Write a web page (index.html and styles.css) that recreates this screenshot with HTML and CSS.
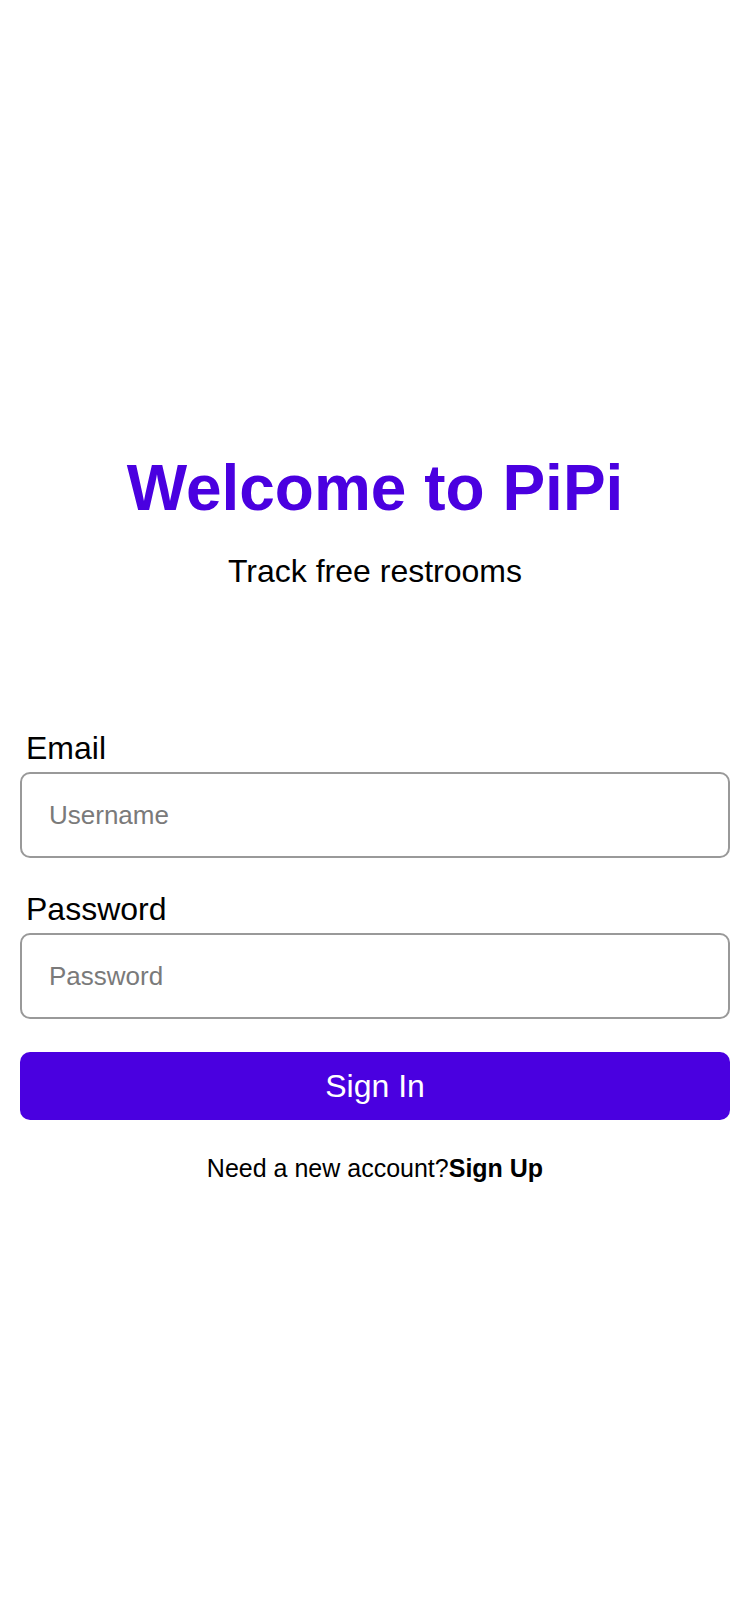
FILE: index.html
```html
<!DOCTYPE html>
<html lang="en">
<head>
<meta charset="utf-8">
<meta name="viewport" content="width=750">
<title>PiPi - Sign In</title>
<link rel="stylesheet" href="styles.css">
</head>
<body>
<main class="screen">
  <header class="intro">
    <h1 class="title">Welcome to PiPi</h1>
    <p class="subtitle">Track free restrooms</p>
  </header>
  <form class="form">
    <label class="field">
      <span class="field-label">Email</span>
      <input class="field-input" type="text" placeholder="Username">
    </label>
    <label class="field">
      <span class="field-label">Password</span>
      <input class="field-input" type="password" placeholder="Password">
    </label>
    <button class="primary-btn" type="button">Sign In</button>
    <p class="switch">Need a new account?<a class="switch-link" href="#">Sign Up</a></p>
  </form>
</main>
</body>
</html>
```

FILE: styles.css
```css
html, body {
  margin: 0;
  padding: 0;
  background: #ffffff;
}

body {
  font-family: "Liberation Sans", Arial, Helvetica, sans-serif;
  color: #000000;
}

.screen {
  width: 750px;
  min-height: 1624px;
  box-sizing: border-box;
  padding: 450px 20px 0 20px;
  display: flex;
  flex-direction: column;
}

.intro {
  display: flex;
  flex-direction: column;
  align-items: center;
  gap: 26px;
}

.title {
  margin: 0;
  font-size: 64px;
  line-height: 76px;
  font-weight: 700;
  color: #4a00e0;
}

.subtitle {
  margin: 0;
  font-size: 32px;
  line-height: 38px;
  color: #000000;
}

.form {
  margin-top: 139px;
  display: flex;
  flex-direction: column;
}

.field {
  display: flex;
  flex-direction: column;
  gap: 5px;
  margin-bottom: 32px;
}

.field-label {
  padding-left: 6px;
  font-size: 32px;
  line-height: 38px;
  color: #000000;
}

.field-input {
  box-sizing: border-box;
  width: 100%;
  height: 86px;
  margin: 0;
  padding: 0 27px;
  border: 2px solid #999999;
  border-radius: 10px;
  background: #ffffff;
  font-family: "Liberation Sans", Arial, Helvetica, sans-serif;
  font-size: 26px;
  color: #000000;
  outline: none;
}

.field-input::placeholder {
  color: #7a7a7a;
  opacity: 1;
}

.primary-btn {
  margin: 1px 0 0 0;
  height: 68px;
  width: 100%;
  border: none;
  border-radius: 10px;
  background: #4a00e0;
  color: #ffffff;
  font-family: "Liberation Sans", Arial, Helvetica, sans-serif;
  font-size: 32px;
  font-weight: 400;
  cursor: pointer;
}

.switch {
  margin: 33px 0 0 0;
  text-align: center;
  font-size: 25px;
  line-height: 30px;
  color: #000000;
}

.switch-link {
  color: #000000;
  text-decoration: none;
  font-weight: 700;
}
```
